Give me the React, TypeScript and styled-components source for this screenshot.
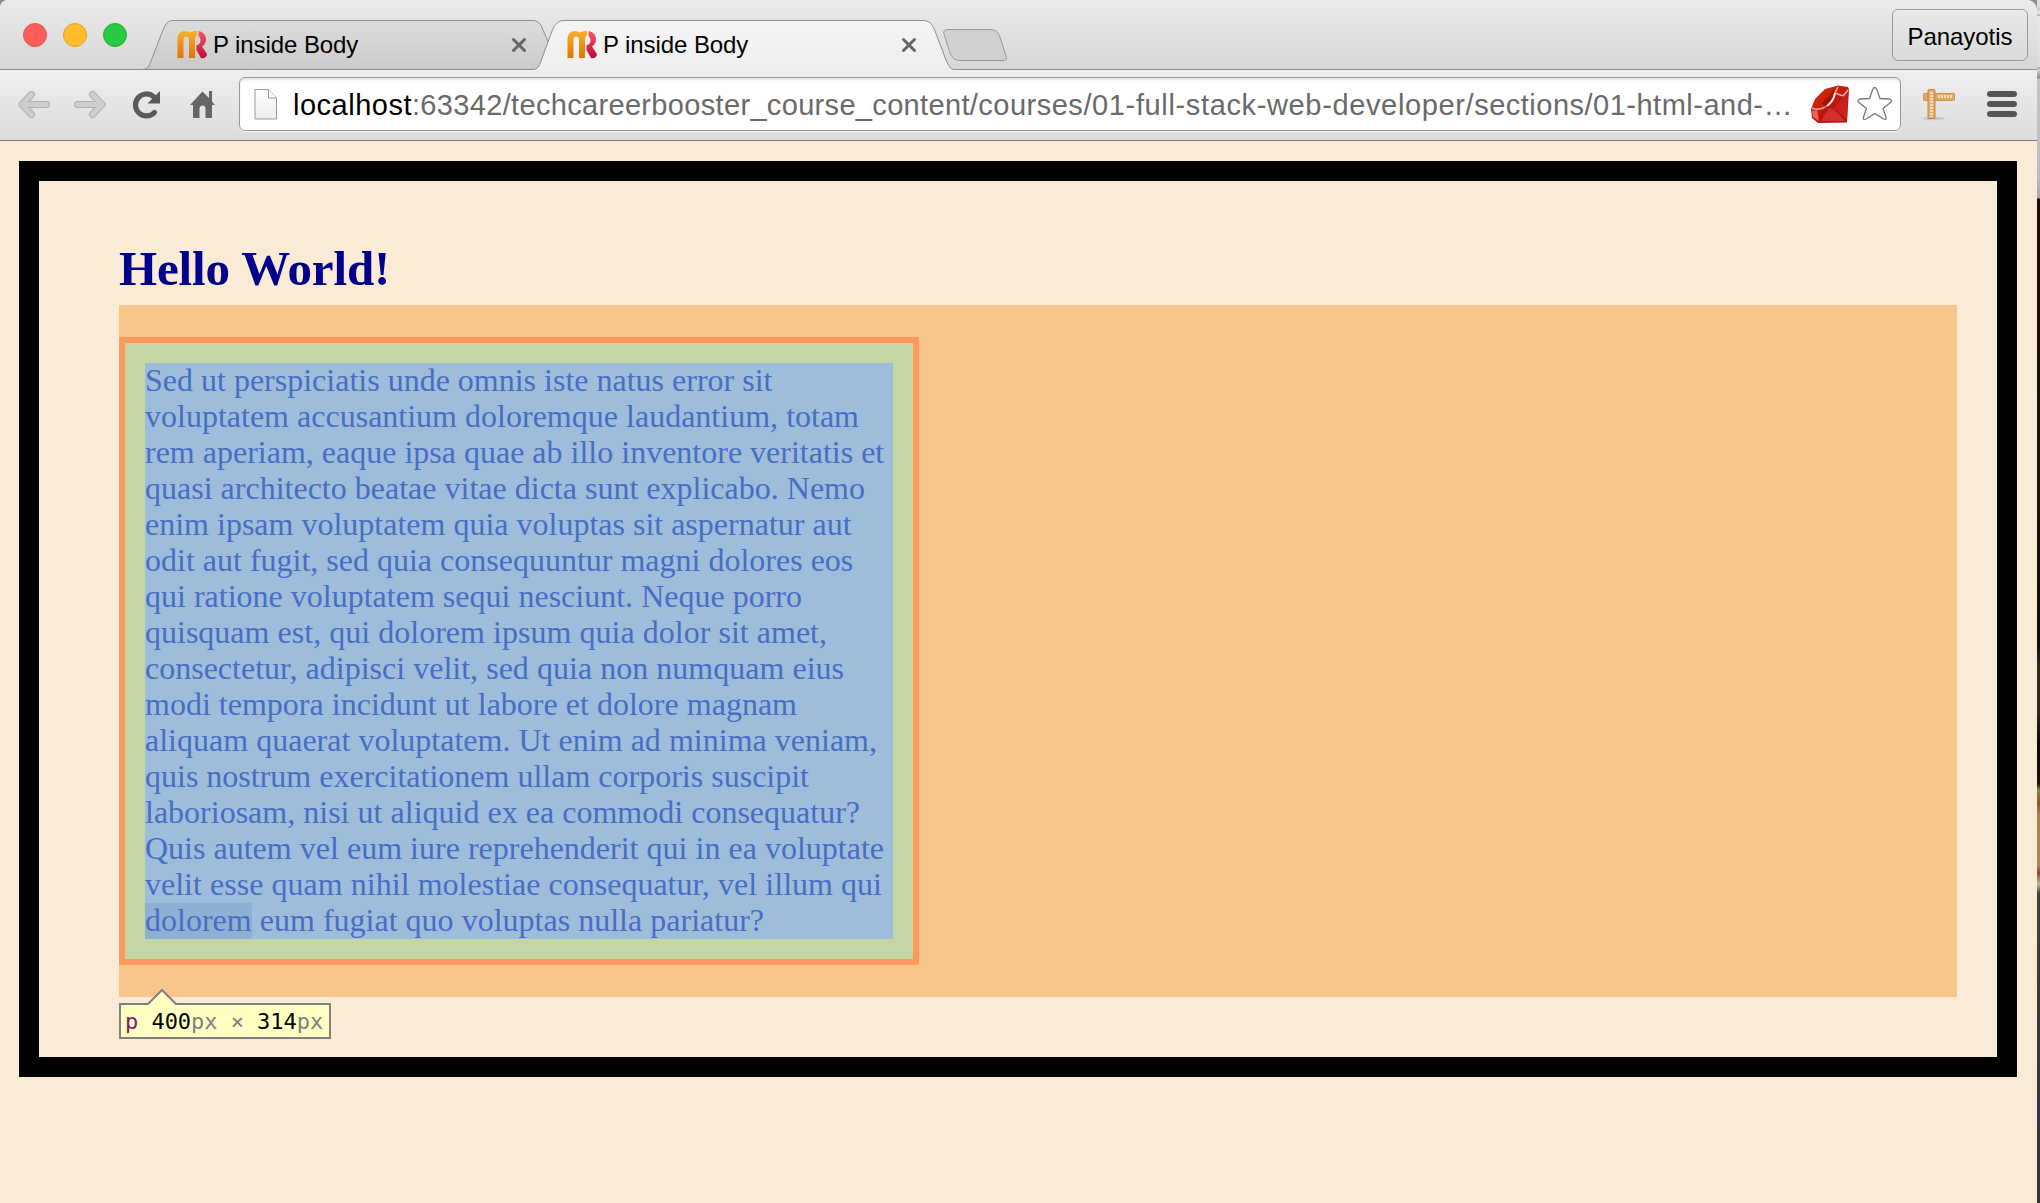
import React from "react";
import styled, { createGlobalStyle } from "styled-components";

const Global = createGlobalStyle`
  * { box-sizing: border-box; }
  body { margin: 0; background: #faebd7; }
`;

const UI_FONT = '"Liberation Sans", Arial, Helvetica, sans-serif';

const Screen = styled.div`
  display: grid;
  grid-template-columns: 2037px 3px;
  width: 2040px;
  height: 1203px;
  overflow: hidden;
  background: #8d8d8d;
`;

const Desktop = styled.div`
  background: linear-gradient(
    180deg,
    #dedede 0, #dedede 7px, #c4c4c4 8px, #efefef 14px, #8a8a8a 15px, #e9e9e9 16px,
    #dcdcdc 67px, #8a8a8a 68px, #d8d8d8 69px, #8a8a8a 78px, #c4c4c4 79px, #bcbcc0 176px, #a8a8ac 198px,
    #1b0d05 199px, #1b1208 500px, #0a0d08 645px, #30281f 665px, #30281f 710px, #0c0704 745px,
    #1b1208 784px, #7d8a48 790px, #9a4f1c 803px, #a3834a 815px,
    #a98a58 865px, #8d4040 873px, #b3bd92 884px, #40413a 893px, #3a3838 1000px, #34344c 1110px, #34343c 1203px
  );
`;

const Window = styled.div`
  display: flex;
  flex-direction: column;
  background: #faebd7;
  border-radius: 8px 10px 0 0;
  overflow: hidden;
`;

const TabStrip = styled.header`
  display: grid;
  grid-template-columns: 132px 840px 1fr auto;
  height: 70px;
  background: linear-gradient(#ebebeb, #d6d6d6);
  box-shadow: inset 0 -1px #8e8e8e;
`;

const Lights = styled.div`
  display: flex;
  gap: 16px;
  padding: 23px 0 0 23px;
`;

const Light = styled.span<{ $fill: string; $edge: string }>`
  width: 24px;
  height: 24px;
  flex: none;
  border-radius: 50%;
  background: ${(p) => p.$fill};
  border: 1px solid ${(p) => p.$edge};
`;

const Tabs = styled.div`
  position: relative;
  display: flex;
  padding-left: 45px;
`;

const TabShapes = styled.svg`
  position: absolute;
  left: 0;
  top: 0;
  display: block;
  overflow: visible;
`;

const Tab = styled.div`
  position: relative;
  display: flex;
  align-items: flex-start;
  width: 390px;
  flex: none;
  height: 70px;
  padding: 31px 40px 0 0;
`;

const TabTitle = styled.span`
  flex: 1;
  margin-left: 5px;
  font: 24px/28px ${UI_FONT};
  letter-spacing: -0.08px;
  color: #000;
`;

const CloseIcon = styled.svg`
  flex: none;
  margin-top: 6px;
`;

const ProfileButton = styled.button`
  height: 52px;
  width: 136px;
  margin: 9px 9px 0 0;
  padding: 4px 0 0;
  border: 1px solid #9a9a9a;
  border-radius: 6px;
  background: linear-gradient(#e9e9e9, #dadada);
  box-shadow: inset 0 1px #f2f2f2;
  font: 24px/28px ${UI_FONT};
  letter-spacing: -0.05px;
  color: #000;
`;

const Toolbar = styled.nav`
  display: flex;
  align-items: flex-start;
  height: 71px;
  background: linear-gradient(#efefef, #dcdcdc);
  border-bottom: 1px solid #7d7b7b;
`;

const NavIcons = styled.div`
  width: 239px;
  height: 70px;
  flex: none;
`;

const Address = styled.div`
  display: flex;
  align-items: flex-start;
  flex: none;
  width: 1662px;
  height: 54px;
  margin-top: 7px;
  padding: 0 0 0 14px;
  background: #fff;
  border: 1px solid #999;
  border-radius: 6px;
  box-shadow: inset 0 2px 2px #e8e8e8, 0 1px #efefef;
`;

const PageIcon = styled.svg`
  flex: none;
  margin-top: 11px;
`;

const Url = styled.span`
  width: 1517px;
  flex: none;
  margin: 10px 0 0 15px;
  font: 29px/34px ${UI_FONT};
  letter-spacing: 0.5px;
  white-space: nowrap;
  color: #6a6a6a;
`;

const Host = styled.span`
  color: #000;
`;

const Segment = styled.span<{ $track: number }>`
  letter-spacing: ${(p) => p.$track}px;
`;

const AddressIcons = styled.svg`
  flex: none;
`;

const Tools = styled.svg`
  flex: none;
  display: block;
`;

const Viewport = styled.main`
  padding: 20px 20px 0 19px;
`;

const Body = styled.div`
  height: 916px;
  padding: 60px 40px 0 80px;
  border: 20px solid #000;
  font-family: "Liberation Serif", "Times New Roman", serif;
`;

const Heading = styled.h1`
  height: 64px;
  margin: 0;
  font-size: 49px;
  line-height: 55px;
  letter-spacing: -0.12px;
  color: #00008b;
  white-space: nowrap;
`;

const MarginArea = styled.section`
  height: 692px;
  padding: 32px 0;
  background: #f8c68b;
`;

const BorderBox = styled.div`
  width: 800px;
  padding: 20px;
  border: 6px solid #ff975f;
  background: #c3d6a3;
`;

const Paragraph = styled.p`
  width: 748px;
  margin: 0;
  background: #9dbddb;
  color: #486ec4;
  font-size: 32px;
  line-height: 34px;
`;

const Line = styled.span<{ $w: number }>`
  display: block;
  width: ${(p) => p.$w}px;
  height: 36px;
  white-space: nowrap;
  text-align: justify;
  text-align-last: justify;
`;

const Mark = styled.span`
  display: inline-block;
  height: 36px;
  background: #8fb0d5;
`;

const Tooltip = styled.div`
  position: relative;
  width: 212px;
  height: 36px;
  margin-top: 6px;
  padding: 0 4px;
  border: 2px solid #808080;
  background: #ffffc2;
  font: 22px/33px "DejaVu Sans Mono", monospace;
  letter-spacing: -0.04px;
  white-space: pre;
  color: #808080;
`;

const Pointer = styled.svg`
  position: absolute;
  left: 25px;
  top: -16px;
`;

const Tag = styled.span`
  color: #881280;
`;

const Num = styled.span`
  color: #000;
`;

const LINES: [string, number][] = [
  ["Sed ut perspiciatis unde omnis iste natus error sit", 627],
  ["voluptatem accusantium doloremque laudantium, totam", 714],
  ["rem aperiam, eaque ipsa quae ab illo inventore veritatis et", 739],
  ["quasi architecto beatae vitae dicta sunt explicabo. Nemo", 720],
  ["enim ipsam voluptatem quia voluptas sit aspernatur aut", 706],
  ["odit aut fugit, sed quia consequuntur magni dolores eos", 708],
  ["qui ratione voluptatem sequi nesciunt. Neque porro", 657],
  ["quisquam est, qui dolorem ipsum quia dolor sit amet,", 682],
  ["consectetur, adipisci velit, sed quia non numquam eius", 699],
  ["modi tempora incidunt ut labore et dolore magnam", 652],
  ["aliquam quaerat voluptatem. Ut enim ad minima veniam,", 732],
  ["quis nostrum exercitationem ullam corporis suscipit", 664],
  ["laboriosam, nisi ut aliquid ex ea commodi consequatur?", 715],
  ["Quis autem vel eum iure reprehenderit qui in ea voluptate", 739],
  ["velit esse quam nihil molestiae consequatur, vel illum qui", 737],
];

const Favicon = () => (
  <svg width="31" height="28" viewBox="0 0 31 28" fill="none">
    <defs>
      <linearGradient id="gold" x1="0" y1="0" x2="0" y2="1">
        <stop stopColor="#f9b02b" />
        <stop offset="1" stopColor="#e07400" />
      </linearGradient>
      <linearGradient id="rose" x1="0" y1="0" x2="0" y2="1">
        <stop stopColor="#f5596b" />
        <stop offset="1" stopColor="#bd0a3c" />
      </linearGradient>
    </defs>
    <path d="M.500 27V9C.500 3 3.500 0 8 0C10 0 11.500 1 12.500 1.500C14 .500 16 0 20 0V4C18.500 5 18 7 18 9V27H12V9C12 7 11 5.500 9.200 5.500S6.500 7 6.500 9V27Z" fill="url(#gold)" />
    <path d="M21.500 0C26.500 1 29 4 29 8.500C29 11.500 27.500 14 25 15.500L30 23C30 26 27 28 24 27L19.500 19V14C22 14 23.500 12 23.500 9.500S22.500 6 21.500 5Z" fill="url(#rose)" />
  </svg>
);

const Close = () => (
  <CloseIcon width="16" height="16" viewBox="0 0 16 16">
    <path d="M2.500 2.500L13.500 13.500M13.500 2.500L2.500 13.500" stroke="#666" strokeWidth="3" strokeLinecap="round" />
  </CloseIcon>
);

export default function App() {
  return (
    <Screen>
      <Global />
      <Window>
        <TabStrip>
          <Lights>
            <Light $fill="#ff5f57" $edge="#e2534b" />
            <Light $fill="#ffbd2e" $edge="#dfa123" />
            <Light $fill="#28ca42" $edge="#1dad2b" />
          </Lights>
          <Tabs>
            <TabShapes width="840" height="71" viewBox="132 0 840 71">
              <defs>
                <linearGradient id="idle" x1="0" y1="0" x2="0" y2="1">
                  <stop stopColor="#dcdcdc" />
                  <stop offset="1" stopColor="#cacaca" />
                </linearGradient>
                <linearGradient id="active" x1="0" y1="0" x2="0" y2="1">
                  <stop stopColor="#f4f4f4" />
                  <stop offset="1" stopColor="#eee" />
                </linearGradient>
              </defs>
              <path d="M142 69.500C148 69.500 149 66 151 61L163 30C166 23 168 20.500 174 20.500H532C538 20.500 541 24 543 30L549 44L540 69.500Z" fill="url(#idle)" stroke="#8e8e8e" />
              <path d="M532 69.500C538 69.500 539 66 541 61L552 31C555 24 558 20.500 564 20.500H922C930 20.500 932 24 935 31L946 60C949 66 950 69.500 955 69.500V71H532Z" fill="url(#active)" />
              <path d="M532 69.500C538 69.500 539 66 541 61L552 31C555 24 558 20.500 564 20.500H922C930 20.500 932 24 935 31L946 60C949 66 950 69.500 955 69.500H972" fill="none" stroke="#8e8e8e" />
              <path d="M948 29.500H990C996 29.500 998 32 1000 37L1006 56C1007 59 1006 60.500 1003 60.500H960C954 60.500 952 57 950 53L944 34C943 31 945 29.500 948 29.500Z" fill="#d0d0d0" stroke="#989898" />
            </TabShapes>
            <Tab>
              <Favicon />
              <TabTitle>P inside Body</TabTitle>
              <Close />
            </Tab>
            <Tab>
              <Favicon />
              <TabTitle>P inside Body</TabTitle>
              <Close />
            </Tab>
          </Tabs>
          <span />
          <ProfileButton>Panayotis</ProfileButton>
        </TabStrip>
        <Toolbar>
          <NavIcons>
            <svg width="239" height="70" viewBox="0 70 239 70" fill="none">
              <g strokeLinecap="round" strokeLinejoin="round">
                <path d="M46.500 104.500H24M31.500 94.500L22 104.500L31.500 114.500" stroke="#b0b0b0" strokeWidth="7" />
                <path d="M46.500 104.500H24M31.500 94.500L22 104.500L31.500 114.500" stroke="#cecece" strokeWidth="5" />
                <path d="M77.500 104.500H100M92.500 94.500L102 104.500L92.500 114.500" stroke="#b0b0b0" strokeWidth="7" />
                <path d="M77.500 104.500H100M92.500 94.500L102 104.500L92.500 114.500" stroke="#cecece" strokeWidth="5" />
              </g>
              <path d="M154.500 112.500A11 11 0 1 1 153.500 96.500" stroke="#5a5a5a" strokeWidth="5.200" strokeLinecap="round" />
              <path d="M160 91V103.500H147.500Z" fill="#5a5a5a" />
              <path d="M202.500 91.500L190 105H193V118H199.500V109Q199.500 105.500 202.500 105.500T205.500 109V118H212V105H215L212 101.500V91H209V98Z" fill="#666" />
            </svg>
          </NavIcons>
          <Address>
            <PageIcon width="24" height="32" viewBox="0 0 24 32">
              <defs>
                <linearGradient id="sheet" x1="0" y1="0" x2="0" y2="1">
                  <stop stopColor="#fff" />
                  <stop offset="1" stopColor="#eee" />
                </linearGradient>
              </defs>
              <path d="M1 .500H14.500L22.500 9V30H1Z" fill="url(#sheet)" stroke="#999" />
              <path d="M14.500 .500V9H22.500" fill="#fff" stroke="#999" />
            </PageIcon>
            <Url>
              <Host>localhost</Host>
              <Segment $track={0.33}>:63342/techcareerbooster_course_content</Segment>
              <Segment $track={0.5}>/courses</Segment>
              <Segment $track={0.64}>/01-full-stack-web-developer</Segment>
              <Segment $track={0.5}>/sections/01-html-and-…</Segment>
            </Url>
            <AddressIcons width="85" height="50" viewBox="1810 78 85 50">
              <defs>
                <linearGradient id="ruby" x1="0" y1="0" x2="1" y2="1">
                  <stop stopColor="#d2371e" />
                  <stop offset="0.500" stopColor="#c01c08" />
                  <stop offset="1" stopColor="#a90f0c" />
                </linearGradient>
              </defs>
              <path d="M1838 85.500L1848 87L1849 90L1847 122.500L1818 123L1812 118L1811 109L1815 99L1825 89Z" fill="url(#ruby)" />
              <path d="M1816 99Q1823 90 1834 88L1834 95L1827 106L1816 109Q1813 105 1816 99Z" fill="#c92205" />
              <path d="M1821 104L1830 95L1834 88L1834 95L1827 106Z" fill="#a51406" />
              <path d="M1843 95L1848 91L1847 120L1834 108Z" fill="#c9221a" />
              <path d="M1829 108L1834 108L1845 121L1821 121Z" fill="#d42f2f" />
              <path d="M1812 111L1817 110L1819 121L1813 117Z" fill="#e8655e" />
              <path d="M1812 108Q1816 111 1826 107Q1833 101 1835 93L1838 87M1835 93L1843 96L1848 90" fill="none" stroke="#f0a99e" strokeWidth="1.500" />
              <path d="M1835 93Q1834 101 1827 106" fill="none" stroke="#fff0ec" strokeWidth="1.800" />
              <path d="M1843 96L1833 108L1846 121M1833 108L1826 107L1819 121" fill="none" stroke="#a3160f" strokeWidth="1" />
              <path d="M1874.700 87.500Q1876 87.500 1877 90L1880 98.500L1889.500 99Q1893 100 1890.500 102.500L1883 108.500L1886 117Q1887 120.500 1883.500 119L1874.700 113.500L1866 119Q1862.500 120.500 1863.500 117L1866.500 108.500L1859 102.500Q1856.500 100 1860 99L1869.500 98.500L1872.500 90Q1873.400 87.500 1874.700 87.500Z" fill="#fff" stroke="#777" strokeWidth="1.300" />
            </AddressIcons>
          </Address>
          <Tools width="136" height="70" viewBox="1901 70 136 70">
            <ellipse cx="1934" cy="118.500" rx="11" ry="1.800" fill="#bbb" opacity="0.700" />
            <rect x="1923.500" y="93.500" width="31" height="7" rx="1" fill="#e2a868" stroke="#cc9254" />
            <path d="M1938 96.500H1953" stroke="#f8dcb0" strokeWidth="3" strokeDasharray="2 1" />
            <rect x="1928" y="89.500" width="7" height="29" rx="1" fill="#e2a868" stroke="#c4853f" />
            <path d="M1931.500 92V117" stroke="#f8dcb0" strokeWidth="3" strokeDasharray="2 1" />
            <g fill="#555">
              <rect x="1987" y="91" width="30" height="6" rx="3" />
              <rect x="1987" y="101" width="30" height="6" rx="3" />
              <rect x="1987" y="111" width="30" height="6" rx="3" />
            </g>
          </Tools>
        </Toolbar>
        <Viewport>
          <Body>
            <Heading>Hello World!</Heading>
            <MarginArea>
              <BorderBox>
                <Paragraph>
                  {LINES.map(([t, w]) => (
                    <Line key={t} $w={w}>{t}</Line>
                  ))}
                  <Line $w={619}>
                    <Mark>dolorem</Mark> eum fugiat quo voluptas nulla pariatur?
                  </Line>
                </Paragraph>
              </BorderBox>
            </MarginArea>
            <Tooltip>
              <Tag>p</Tag> <Num>400</Num>px × <Num>314</Num>px
              <Pointer width="32" height="17" viewBox="0 0 32 17">
                <path d="M2 16L16 2L30 16V17H2Z" fill="#ffffc2" />
                <path d="M2 15L16 1L30 15" fill="none" stroke="#808080" strokeWidth="2" />
              </Pointer>
            </Tooltip>
          </Body>
        </Viewport>
      </Window>
      <Desktop />
    </Screen>
  );
}
